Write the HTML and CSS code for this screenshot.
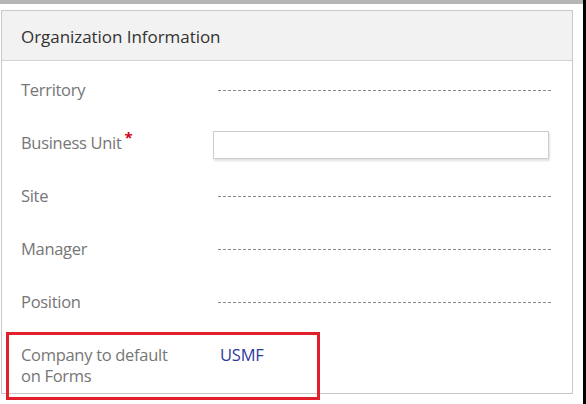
FILE: index.html
```html
<!DOCTYPE html>
<html>
<head>
<meta charset="utf-8">
<link rel="stylesheet" href="styles.css">
</head>
<body>
<div class="page">
  <div class="main">
    <div class="topbar"></div>
    <section class="panel">
      <header class="panel-head">Organization Information</header>
      <div class="fields">
        <div class="row">
          <div class="label">Territory</div>
          <div class="value"><div class="dash"></div></div>
        </div>
        <div class="row">
          <div class="label">Business Unit<span class="req">*</span></div>
          <div class="value"><div class="input"></div></div>
        </div>
        <div class="row">
          <div class="label">Site</div>
          <div class="value"><div class="dash"></div></div>
        </div>
        <div class="row">
          <div class="label">Manager</div>
          <div class="value"><div class="dash"></div></div>
        </div>
        <div class="row">
          <div class="label">Position</div>
          <div class="value"><div class="dash"></div></div>
        </div>
        <div class="row company">
          <div class="label">Company to default<br>on Forms</div>
          <div class="value link">USMF</div>
        </div>
      </div>
    </section>
  </div>
  <div class="edge"></div>
</div>
</body>
</html>
```

FILE: styles.css
```css
html, body {
  margin: 0;
  padding: 0;
  background: #ffffff;
}
body {
  font-family: "Open Sans", "Noto Sans", sans-serif;
  width: 586px;
  height: 404px;
  overflow: hidden;
}
.page {
  display: flex;
  height: 404px;
}
.main {
  flex: 1;
  display: flex;
  flex-direction: column;
}
.edge {
  width: 3px;
  background: #000;
}
.topbar {
  height: 4px;
  background: #b6b6b6;
}
.panel {
  margin: 6px 0 0 1px;
  width: 570px;
  height: 382px;
  border: 1px solid #c8c8c8;
  position: relative;
}
.panel-head {
  box-sizing: border-box;
  height: 50px;
  background: #f2f2f2;
  border-bottom: 1px solid #d2d2d2;
  display: flex;
  align-items: center;
  padding: 1px 0 0 19px;
  font-size: 17px;
  color: #333;
  letter-spacing: -0.05px;
}
.fields {
  padding-top: 2px;
  display: flex;
  flex-direction: column;
}
.row {
  height: 53px;
  display: grid;
  grid-template-columns: 197px 1fr;
  align-items: center;
  padding: 0 20px 0 19px;
}
.label {
  font-size: 16.5px;
  color: #767676;
  letter-spacing: -0.3px;
  position: relative;
}
.req {
  color: #d0021b;
  font-size: 15px;
  font-weight: 700;
  position: relative;
  top: -6px;
  margin-left: 3px;
}
.value {
  height: 100%;
  display: flex;
  align-items: center;
}
.dash {
  width: 100%;
  height: 1px;
  margin-top: 1px;
  background: repeating-linear-gradient(to right, #8a8a8a 0 3px, transparent 3px 5px);
}
.input {
  margin-left: -5px;
  margin-top: 5px;
  width: 100%;
  height: 26px;
  border: 1px solid #cdcdcd;
  background: #fff;
  box-shadow: 1px 2px 2px rgba(0, 0, 0, 0.12);
}
.company {
  height: 54px;
  align-items: start;
  padding-top: 16px;
  position: relative;
}
.company .label {
  line-height: 21px;
}
.company .value {
  height: auto;
  line-height: 21px;
  padding-left: 2px;
}
.link {
  color: #2d3b9e;
  font-size: 16.5px;
  letter-spacing: -0.2px;
}
.company::after {
  content: "";
  position: absolute;
  left: 4px;
  top: 4px;
  width: 308px;
  height: 62px;
  border: 3px solid #e0202a;
}
```
